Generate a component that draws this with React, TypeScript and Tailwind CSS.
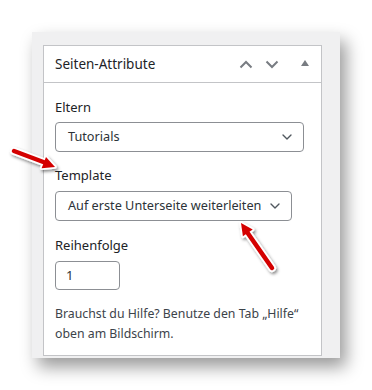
import { ChevronDown } from 'lucide-react'

const font = { fontFamily: '"Segoe UI", "Noto Sans", "Open Sans", sans-serif' }

function SelectBox({ label, width }: { label: string; width: string }) {
  return (
    <div
      className={`${width} h-[30px] flex items-center justify-between pl-[12px] pr-[8px] border border-[#8c8f94] rounded-[4px] bg-white text-[12.7px] text-[#2c3338] whitespace-nowrap`}
    >
      <span>{label}</span>
      <ChevronDown size={16} strokeWidth={2} className="text-[#50575e] shrink-0" />
    </div>
  )
}

function Arrows() {
  return (
    <svg className="absolute left-0 top-0 pointer-events-none" width="372" height="390">
      <defs>
        <filter id="sh" x="-50%" y="-50%" width="200%" height="200%">
          <feDropShadow dx="1.5" dy="2" stdDeviation="1.5" floodColor="#000" floodOpacity="0.45" />
        </filter>
      </defs>
      <g filter="url(#sh)" strokeLinejoin="round" strokeLinecap="round">
        {/* arrow pointing at Template */}
        <line x1="14" y1="151" x2="46" y2="163" stroke="#fff" strokeWidth="8" />
        <polygon points="55,167 41.6,168.3 46,157.1" fill="#fff" stroke="#fff" strokeWidth="3.5" />
        <line x1="14" y1="151" x2="46" y2="163" stroke="#d40000" strokeWidth="4.5" />
        <polygon points="55,167 41.6,168.3 46,157.1" fill="#d40000" />
        {/* arrow pointing at select */}
        <line x1="272" y1="268" x2="247" y2="232" stroke="#fff" strokeWidth="8" />
        <polygon points="241,223 252.7,229.5 242.9,236.3" fill="#fff" stroke="#fff" strokeWidth="3.5" />
        <line x1="272" y1="268" x2="247" y2="232" stroke="#d40000" strokeWidth="4.5" />
        <polygon points="241,223 252.7,229.5 242.9,236.3" fill="#d40000" />
      </g>
    </svg>
  )
}

export default function App() {
  return (
    <div className="relative w-[372px] h-[390px] bg-white overflow-hidden" style={font}>
      <div className="pt-[32px] pl-[32px]">
        <div className="w-[308px] bg-[#f0f0f1] pt-[13px] pl-[11px] pr-[18px] pb-[2px] shadow-[6px_9px_16px_rgba(0,0,0,0.4)]">
          <div className="bg-white border border-[#c3c4c7]">
            {/* Header */}
            <div className="h-[37px] flex items-center justify-between border-b border-[#c3c4c7] pl-[11px] pr-[12px]">
              <h2 className="text-[13.5px] text-[#1d2327]">Seiten-Attribute</h2>
              <div className="flex items-center">
                <svg width="14" height="9" viewBox="0 0 14 9" className="mr-[12px]">
                  <path d="M1.5 7.5 L7 2 L12.5 7.5" fill="none" stroke="#787c82" strokeWidth="2" />
                </svg>
                <svg width="14" height="9" viewBox="0 0 14 9" className="mr-[22px]">
                  <path d="M1.5 1.5 L7 7 L12.5 1.5" fill="none" stroke="#787c82" strokeWidth="2" />
                </svg>
                <svg width="8" height="6" viewBox="0 0 8 6" className="mb-[3px]">
                  <path d="M4 0 L8 6 L0 6 Z" fill="#787c82" />
                </svg>
              </div>
            </div>

            {/* Body */}
            <div className="pl-[11px] pt-[14px] pb-[11px] text-[13px] text-[#1d2327]">
              <div className="leading-[20px] mb-[5px]">Eltern</div>
              <SelectBox label="Tutorials" width="w-[249px]" />

              <div className="leading-[20px] mt-[13px] mb-[6px]">Template</div>
              <SelectBox label="Auf erste Unterseite weiterleiten" width="w-[237px]" />

              <div className="leading-[20px] mt-[14px] mb-[6px]">Reihenfolge</div>
              <div className="w-[65px] h-[29px] flex items-center pl-[10px] border border-[#8c8f94] rounded-[4px] text-[13px] text-[#2c3338]">
                1
              </div>

              <p className="mt-[14px] text-[12.3px] leading-[20px] text-[#3c434a] whitespace-nowrap">
                Brauchst du Hilfe? Benutze den Tab „Hilfe“
                <br />
                oben am Bildschirm.
              </p>
            </div>
          </div>
        </div>
      </div>
      <Arrows />
    </div>
  )
}
